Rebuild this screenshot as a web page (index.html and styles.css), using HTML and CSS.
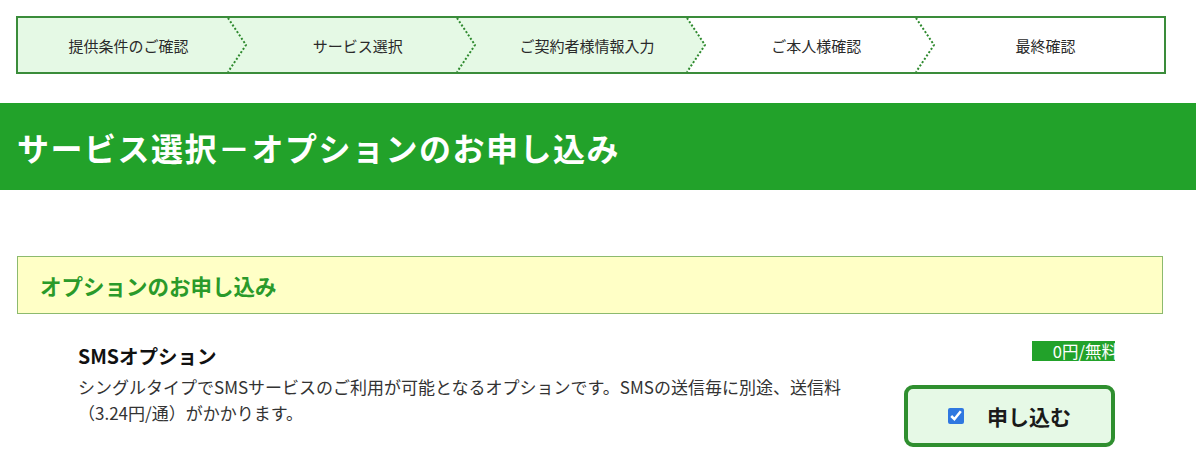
FILE: index.html
```html
<!DOCTYPE html>
<html lang="ja">
<head>
<meta charset="utf-8">
<title>サービス選択－オプションのお申し込み</title>
<link rel="stylesheet" href="styles.css">
</head>
<body>
  <ol class="stepper">
    <li class="step done">提供条件のご確認
      <svg class="chev chev-green" viewBox="0 0 20 54" preserveAspectRatio="none"><polygon points="1,0 20,0 20,54 1,54 19,27"/><polyline points="1,0 19,27 1,54"/></svg>
    </li>
    <li class="step done">サービス選択
      <svg class="chev chev-green" viewBox="0 0 20 54" preserveAspectRatio="none"><polygon points="1,0 20,0 20,54 1,54 19,27"/><polyline points="1,0 19,27 1,54"/></svg>
    </li>
    <li class="step done">ご契約者様情報入力
      <svg class="chev chev-white" viewBox="0 0 20 54" preserveAspectRatio="none"><polygon points="1,0 20,0 20,54 1,54 19,27"/><polyline points="1,0 19,27 1,54"/></svg>
    </li>
    <li class="step">ご本人様確認
      <svg class="chev chev-white" viewBox="0 0 20 54" preserveAspectRatio="none"><polygon points="1,0 20,0 20,54 1,54 19,27"/><polyline points="1,0 19,27 1,54"/></svg>
    </li>
    <li class="step">最終確認</li>
  </ol>

  <h1 class="banner">サービス選択－オプションのお申し込み</h1>

  <section class="panel">
    <h2 class="panel-head">オプションのお申し込み</h2>
    <div class="option">
      <div class="option-main">
        <h3 class="option-title">SMSオプション</h3>
        <p class="option-desc">シングルタイプでSMSサービスのご利用が可能となるオプションです。SMSの送信毎に別途、送信料（3.24円/通）がかかります。</p>
      </div>
      <div class="option-side">
        <div class="price"><span>0円/無料</span></div>
        <label class="apply">
          <input type="checkbox" checked>
          <span class="apply-text">申し込む</span>
        </label>
      </div>
    </div>
  </section>
</body>
</html>
```

FILE: styles.css
```css
* { box-sizing: border-box; }

body {
  margin: 0;
  background: #fff;
  font-family: "Noto Sans CJK JP", "Noto Sans", sans-serif;
  color: #222;
  width: 1196px;
}

.stepper {
  list-style: none;
  margin: 16px 0 0 16px;
  padding: 0;
  width: 1150px;
  height: 58px;
  border: 2px solid #3a8c3a;
  display: flex;
  background: #fff;
}

.step {
  position: relative;
  flex: 1;
  display: flex;
  align-items: center;
  justify-content: center;
  padding-right: 8px;
  font-size: 15px;
  color: #2a2a2a;
  background: #fff;
}

.step.done { background: #e5f9e5; }

.chev {
  position: absolute;
  top: 0;
  right: 0;
  width: 20px;
  height: 100%;
}

.chev polyline {
  fill: none;
  stroke: #2f8a2f;
  stroke-width: 2;
  stroke-dasharray: 2 2;
}

.chev-green polygon { fill: #e5f9e5; }
.chev-white polygon { fill: #fff; }

.banner {
  margin: 29px 0 0;
  height: 87px;
  background: #22a22a;
  color: #fff;
  font-size: 32px;
  font-weight: 700;
  display: flex;
  align-items: center;
  padding-left: 17px;
  letter-spacing: 1.5px;
}

.panel {
  margin: 66px 0 0 17px;
  width: 1146px;
}

.panel-head {
  margin: 0;
  height: 58px;
  background: #ffffc6;
  border: 1px solid #8cba6e;
  color: #2a9a2a;
  font-size: 21.5px;
  font-weight: 700;
  display: flex;
  align-items: center;
  padding-left: 22px;
}

.option {
  display: flex;
  justify-content: space-between;
  padding: 27px 48px 0 61px;
}

.option-main { width: 780px; }

.option-title {
  margin: 2px 0 0;
  font-size: 19.5px;
  font-weight: 700;
  color: #111;
  line-height: 26px;
}

.option-desc {
  margin: 5px 0 0;
  font-size: 17px;
  line-height: 26px;
  color: #333;
}

.option-side {
  display: flex;
  flex-direction: column;
  align-items: flex-end;
}

.price {
  width: 83px;
  height: 20px;
  background: #22a22a;
  color: #fff;
  font-size: 16.5px;
  line-height: 20px;
  text-align: right;
  overflow: hidden;
  white-space: nowrap;
}

.price span { margin-right: -3px; }

.apply {
  margin-top: 24px;
  width: 211px;
  height: 62px;
  border: 4px solid #2f8f2f;
  border-radius: 9px;
  background: #e6f9e6;
  display: flex;
  align-items: center;
  padding-left: 40px;
  gap: 23px;
}

.apply input {
  margin: 0;
  width: 16px;
  height: 16px;
  accent-color: #2f78e0;
}

.apply-text {
  font-size: 21px;
  font-weight: 700;
  color: #1a1a1a;
}
```
